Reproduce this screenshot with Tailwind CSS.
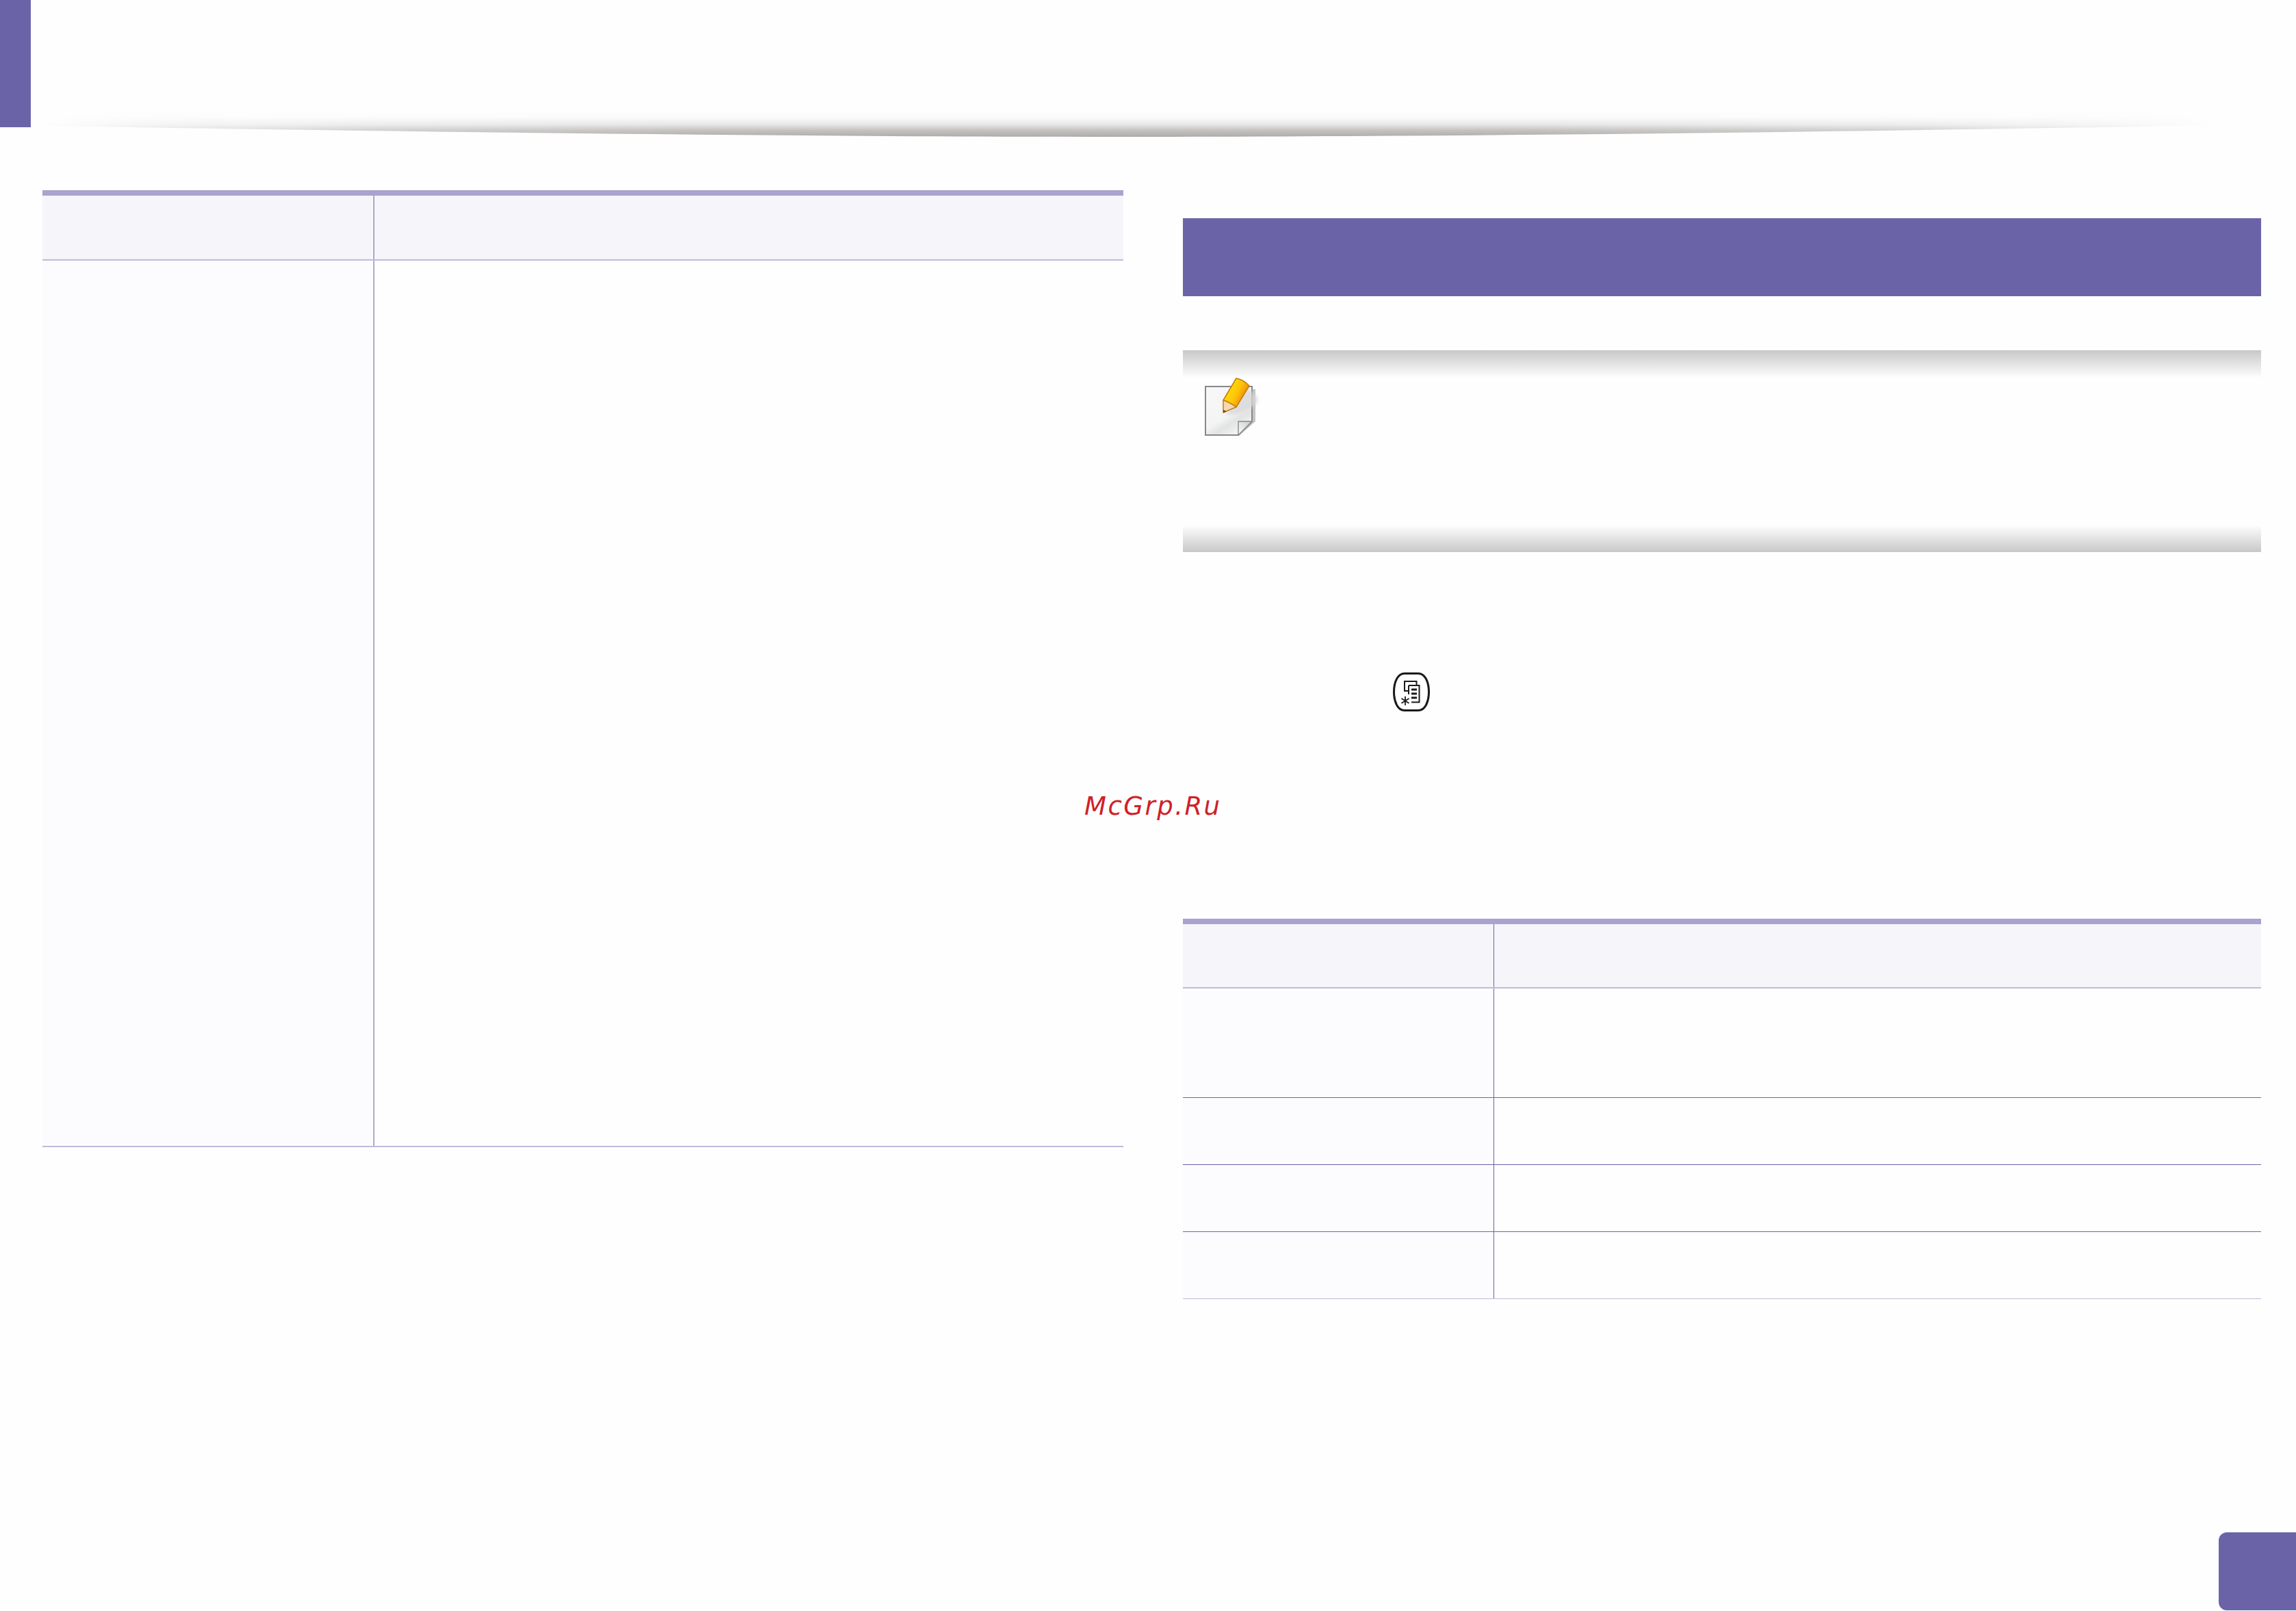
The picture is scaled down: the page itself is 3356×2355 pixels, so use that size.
<!DOCTYPE html>
<html lang="en">
<head>
  <meta charset="UTF-8">
  <title>Manual page</title>
  <script src="https://cdn.jsdelivr.net/npm/@tailwindcss/browser@4"></script>
</head>
<body class="bg-[#fefefe]">
  <div class="relative w-[3356px] h-[2355px] overflow-hidden flex flex-col">

    <!-- Header: purple tab and swoosh -->
    <header class="relative h-[186px] shrink-0">
      <div class="w-[45px] h-[186px] bg-[#6b63a8]"></div>
      <svg class="absolute left-0 top-0 overflow-visible" width="3356" height="210" viewBox="0 0 3356 210">
        <defs>
          <linearGradient id="swooshFill" gradientUnits="userSpaceOnUse" x1="0" y1="160" x2="0" y2="200">
            <stop offset="0" stop-color="#fefefe"/>
            <stop offset="0.3" stop-color="#fafafa"/>
            <stop offset="0.55" stop-color="#e8e7e6"/>
            <stop offset="0.75" stop-color="#c6c5c3"/>
            <stop offset="1" stop-color="#aeaaa9"/>
          </linearGradient>
          <linearGradient id="swooshFade" gradientUnits="userSpaceOnUse" x1="62" y1="0" x2="3240" y2="0">
            <stop offset="0" stop-color="#fff" stop-opacity="0"/>
            <stop offset="0.043" stop-color="#fff" stop-opacity="0.35"/>
            <stop offset="0.15" stop-color="#fff" stop-opacity="0.75"/>
            <stop offset="0.295" stop-color="#fff" stop-opacity="1"/>
            <stop offset="0.685" stop-color="#fff" stop-opacity="1"/>
            <stop offset="0.862" stop-color="#fff" stop-opacity="0.75"/>
            <stop offset="0.956" stop-color="#fff" stop-opacity="0.3"/>
            <stop offset="1" stop-color="#fff" stop-opacity="0"/>
          </linearGradient>
          <mask id="swooshMask" maskUnits="userSpaceOnUse" x="0" y="150" width="3356" height="60">
            <rect x="0" y="150" width="3356" height="60" fill="url(#swooshFade)"/>
          </mask>
        </defs>
        <path d="M62 160 L3240 160 L3240 183 C2700 193 2100 200 1650 200 C1200 200 600 193 62 184 Z" fill="url(#swooshFill)" mask="url(#swooshMask)"/>
      </svg>
    </header>

    <main class="flex-1 flex items-start">
      <!-- Left table -->
      <section class="ml-[62px] mt-[92px] w-[1580px] shrink-0 border-t-[8px] border-[#a9a3cf]">
        <div class="flex h-[95px] bg-[#f5f5fa] border-b-2 border-[#c0bbdc]">
          <div class="w-[485px] border-r border-[#6b63a8]"></div>
          <div class="flex-1 bg-[#f5f5fa]"></div>
        </div>
        <div class="flex h-[1296px] border-b-2 border-[#c0bbdc]">
          <div class="w-[485px] bg-[#fcfcfe] border-r border-[#6b63a8]"></div>
          <div class="flex-1"></div>
        </div>
      </section>

      <!-- Right column -->
      <section class="ml-[87px] mt-[133px] w-[1576px] shrink-0">
        <div class="h-[114px] bg-[#6b63a8]"></div>

        <!-- Note box -->
        <div class="mt-[79px] h-[295px] flex flex-col">
          <div class="h-[40px] bg-linear-to-b from-[#c8c8c8] to-[#fefefe]"></div>
          <div class="flex-1 pl-[32px]">
            <svg class="overflow-visible" width="90" height="100" viewBox="0 -12 90 100">
              <defs>
                <linearGradient id="paper" x1="0" y1="0" x2="0.6" y2="1">
                  <stop offset="0" stop-color="#f8f8f8"/>
                  <stop offset="0.65" stop-color="#f4f4f4"/>
                  <stop offset="0.8" stop-color="#e2e3e3"/>
                  <stop offset="1" stop-color="#f3f3f3"/>
                </linearGradient>
                <linearGradient id="pencilBody" x1="0" y1="0" x2="1" y2="0.55">
                  <stop offset="0" stop-color="#ffee55"/>
                  <stop offset="0.3" stop-color="#ffd90a"/>
                  <stop offset="0.62" stop-color="#fdc508"/>
                  <stop offset="1" stop-color="#ea7a10"/>
                </linearGradient>
                <linearGradient id="curl" x1="0" y1="1" x2="1" y2="0">
                  <stop offset="0" stop-color="#ffffff"/>
                  <stop offset="1" stop-color="#c9c9c9"/>
                </linearGradient>
                <filter id="softShadow" x="-30%" y="-30%" width="160%" height="160%">
                  <feGaussianBlur stdDeviation="2"/>
                </filter>
              </defs>
              <!-- page shadow -->
              <path d="M5 73 H50 L74 52 V5 H70 V52 L49 70 H5 Z" fill="#c4c4c4"/>
              <!-- page -->
              <path d="M1 1 H69 V52 L49 72 H1 Z" fill="url(#paper)" stroke="#88888a" stroke-width="2"/>
              <!-- pencil shadow -->
              <path d="M30 42 Q52 44 74 28 Q82 18 72 12 L64 4 Z" fill="#d6d6d8" opacity="0.75" filter="url(#softShadow)"/>
              <!-- page curl -->
              <path d="M49 52 H69 L49 72 Z" fill="url(#curl)" stroke="#88888a" stroke-width="1.4" stroke-linejoin="round"/>
              <!-- pencil -->
              <path d="M27 21 L46 -11 Q57 -9 65 0 L46 31 Q36 24 27 21 Z" fill="url(#pencilBody)" stroke="#c27d0c" stroke-width="1.5" stroke-linejoin="round"/>
              <path d="M27 21 Q36 24 46 31 L27 39 Z" fill="#f6d8b4" stroke="#c27d0c" stroke-width="1.5" stroke-linejoin="round"/>
              <path d="M27 35 L27 39.5 L32 37.5 Z" fill="#6e4a12"/>
            </svg>
          </div>
          <div class="h-[39px] bg-linear-to-b from-[#fefefe] to-[#c8c8c8]"></div>
        </div>

        <!-- Key glyph -->
        <svg class="ml-[307px] mt-[176px]" width="54" height="57" viewBox="0 0 54 57">
          <path d="M17 1.5 H37 C47 1.5 52.5 14 52.5 28.5 C52.5 43 47 55.5 37 55.5 H17 C7 55.5 1.5 43 1.5 28.5 C1.5 14 7 1.5 17 1.5 Z" fill="#fff" stroke="#1a1a1a" stroke-width="3"/>
          <path d="M23 27 H17 V13 H34.5 V19" fill="none" stroke="#1a1a1a" stroke-width="2"/>
          <path d="M23 19 H38.5 V43.5 H27" fill="none" stroke="#1a1a1a" stroke-width="2"/>
          <path d="M23 19 V32" fill="none" stroke="#1a1a1a" stroke-width="2"/>
          <path d="M27 25 H35 M27 31 H35 M27 37 H35" fill="none" stroke="#1a1a1a" stroke-width="3"/>
          <path d="M18 35 V48 M12.5 38 L23.5 45 M23.5 38 L12.5 45" fill="none" stroke="#1a1a1a" stroke-width="1.8"/>
        </svg>

        <!-- Right table -->
        <div class="mt-[303px] border-t-[8px] border-[#a9a3cf]">
          <div class="flex h-[94px] bg-[#f5f5fa] border-b-2 border-[#c0bbdc]">
            <div class="w-[455px] border-r border-[#6b63a8]"></div>
            <div class="flex-1"></div>
          </div>
          <div class="flex h-[160px] border-b border-[#6b63a8]">
            <div class="w-[455px] bg-[#fcfcfe] border-r border-[#6b63a8]"></div>
            <div class="flex-1"></div>
          </div>
          <div class="flex h-[98px] border-b border-[#6b63a8]">
            <div class="w-[455px] bg-[#fcfcfe] border-r border-[#6b63a8]"></div>
            <div class="flex-1"></div>
          </div>
          <div class="flex h-[98px] border-b border-[#6b63a8]">
            <div class="w-[455px] bg-[#fcfcfe] border-r border-[#6b63a8]"></div>
            <div class="flex-1"></div>
          </div>
          <div class="flex h-[98px] border-b border-[#c0bbdc]">
            <div class="w-[455px] bg-[#fcfcfe] border-r border-[#6b63a8]"></div>
            <div class="flex-1"></div>
          </div>
        </div>
      </section>
    </main>

    <!-- Page number tab -->
    <footer class="flex justify-end pb-px shrink-0">
      <div class="w-[113px] h-[114px] bg-[#6b63a8] rounded-l-[12px]"></div>
    </footer>

    <!-- Watermark -->
    <div class="absolute left-[1585px] top-[1157px] font-['DejaVu_Sans',sans-serif] italic text-[37px] leading-[44px] tracking-[2.5px] text-[#cf2027]">McGrp.Ru</div>
  </div>
</body>
</html>
